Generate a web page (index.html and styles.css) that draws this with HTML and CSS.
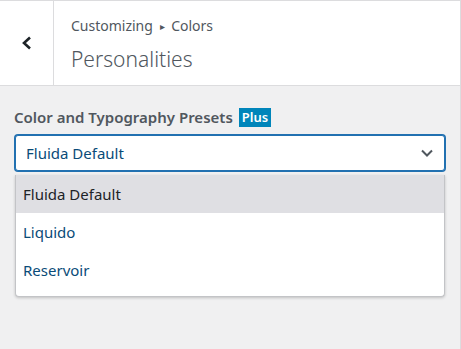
FILE: index.html
```html
<!DOCTYPE html>
<html>
<head>
<meta charset="utf-8">
<link rel="stylesheet" href="styles.css">
</head>
<body>
<div class="panel">
  <div class="header">
    <button class="back" aria-label="Back">
      <svg width="16" height="16" viewBox="0 0 16 16"><path d="M11 2.5 L5 8 L11 13.5" fill="none" stroke="#1d2327" stroke-width="2.6"/></svg>
    </button>
    <div class="title">
      <div class="crumbs">Customizing <span class="sep">&#9656;</span> Colors</div>
      <div class="name">Personalities</div>
    </div>
  </div>
  <div class="section">
    <div class="label">Color and Typography Presets <span class="badge">Plus</span></div>
    <div class="select-wrap">
      <div class="select">
        <span>Fluida Default</span>
        <svg class="chev" width="14" height="10" viewBox="0 0 14 10"><path d="M2 2.5 L7 7.5 L12 2.5" fill="none" stroke="#50575e" stroke-width="2"/></svg>
      </div>
      <ul class="menu">
        <li class="opt active">Fluida Default</li>
        <li class="opt">Liquido</li>
        <li class="opt">Reservoir</li>
      </ul>
    </div>
  </div>
</div>
</body>
</html>
```
FILE: styles.css
```css
html, body {
  margin: 0;
  padding: 0;
  background: #f0f0f1;
}
body {
  font-family: "Noto Sans", "Open Sans", sans-serif;
  color: #50575e;
}
.panel {
  width: 460px;
  height: 349px;
  border-right: 1px solid #dcdcde;
  background: #f0f0f1;
}
.header {
  display: flex;
  height: 84px;
  background: #fff;
  border-top: 1px solid #dcdcde;
  border-bottom: 1px solid #dcdcde;
}
.back {
  width: 54px;
  border: 0;
  border-right: 1px solid #dcdcde;
  background: #fff;
  display: flex;
  align-items: center;
  justify-content: center;
  padding: 0;
}
.title {
  padding: 14px 0 0 17px;
}
.crumbs {
  font-size: 14px;
  line-height: 22px;
  color: #50575e;
}
.sep {
  font-size: 10px;
  position: relative;
  top: -1px;
  margin: 0 3px;
}
.name {
  font-size: 21px;
  font-weight: 300;
  line-height: 30px;
  margin-top: 6px;
  color: #50575e;
}
.section {
  padding: 21px 14px 0 14px;
}
.label {
  font-size: 15px;
  font-weight: 600;
  line-height: 20px;
  color: #50575e;
  display: flex;
  align-items: center;
  gap: 6px;
}
.badge {
  background: #0085ba;
  color: #fff;
  font-size: 13px;
  font-weight: 600;
  line-height: 19px;
  padding: 0 3px;
}
.select-wrap {
  position: relative;
  margin-top: 8px;
}
.select {
  height: 34px;
  border: 1px solid #2271b1;
  box-shadow: 0 0 0 1px #2271b1;
  border-radius: 3px;
  background: #fff;
  display: flex;
  align-items: center;
  justify-content: space-between;
  padding: 0 10px 0 10px;
  margin: 1px 1px 0 1px;
  font-size: 15px;
  color: #0a4b78;
}
.menu {
  position: absolute;
  left: 1px;
  right: 1px;
  top: 40px;
  margin: 0;
  padding: 0 0 7px 0;
  list-style: none;
  background: #fff;
  border: 1px solid #c3c4c7;
  border-top: 0;
  border-radius: 0 0 4px 4px;
  box-shadow: 0 1px 3px rgba(0,0,0,0.2);
}
.opt {
  height: 38px;
  line-height: 38px;
  padding-left: 7px;
  font-size: 15px;
  color: #0a4b78;
}
.opt.active {
  background: #dfdfe3;
  color: #1d2327;
}
```
